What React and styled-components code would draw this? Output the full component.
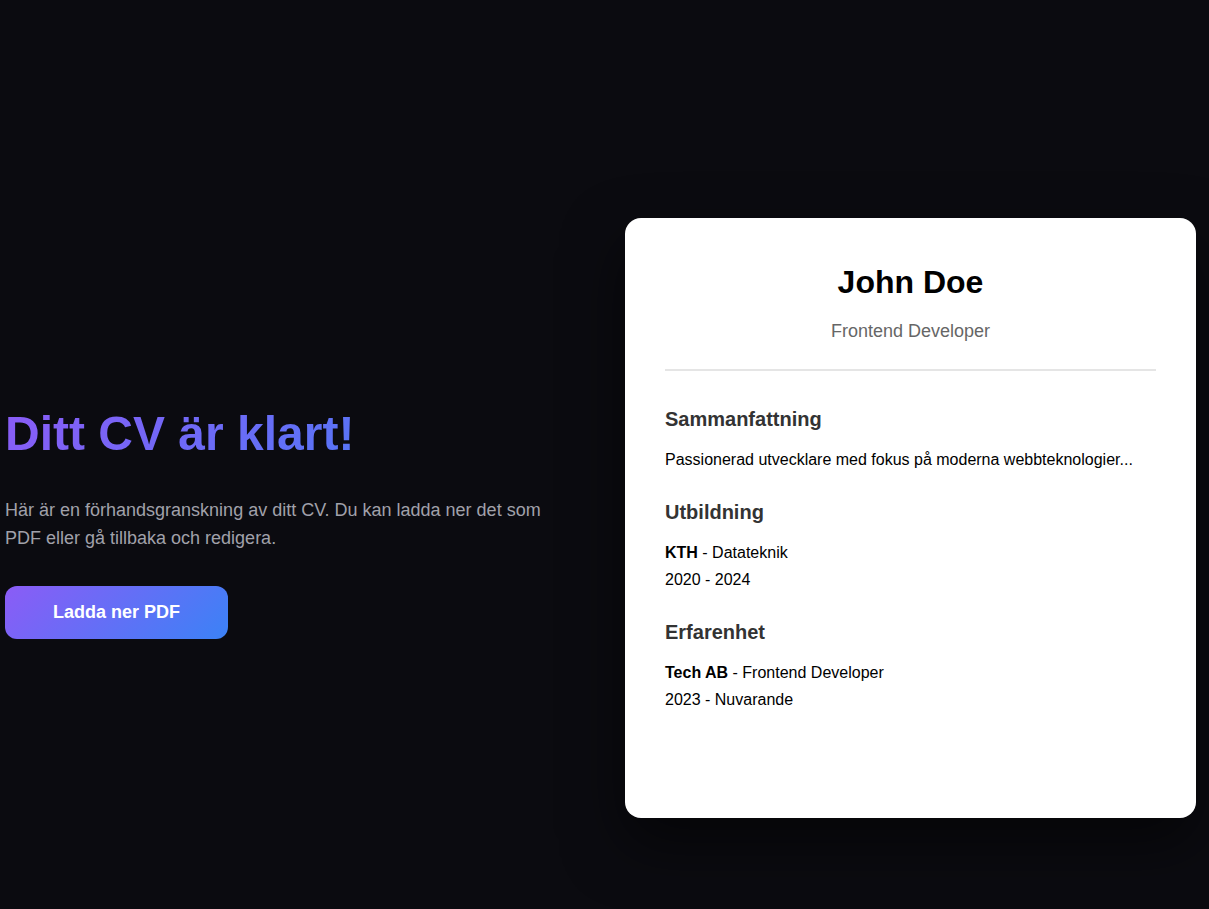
import styled, { createGlobalStyle } from 'styled-components';

const GlobalStyle = createGlobalStyle`
  * {
    box-sizing: border-box;
  }
  body {
    margin: 0;
    background: #0b0b10;
    font-family: 'Liberation Sans', Arial, sans-serif;
  }
`;

const Page = styled.main`
  min-height: 100vh;
  padding: 127px 13px 0 5px;
  display: flex;
  align-items: center;
  justify-content: space-between;
`;

const Intro = styled.section`
  width: 560px;
  margin-top: 8px;

  h1 {
    margin: 0 0 35px;
    font-size: 48px;
    font-weight: 700;
    line-height: normal;
    background: linear-gradient(135deg, #8b5cf6, #3b82f6);
    -webkit-background-clip: text;
    background-clip: text;
    color: transparent;
  }

  p {
    margin: 0 0 34px;
    font-size: 18px;
    line-height: 28px;
    color: #a1a1aa;
    max-width: 545px;
  }
`;

const DownloadButton = styled.button`
  border: none;
  border-radius: 12px;
  padding: 16px 48px;
  font-family: inherit;
  font-size: 18px;
  font-weight: 700;
  color: #ffffff;
  background: linear-gradient(135deg, #8b5cf6, #3b82f6);
  cursor: pointer;
`;

const Card = styled.article`
  width: 571px;
  height: 600px;
  background: #ffffff;
  border-radius: 16px;
  padding: 40px;
  box-shadow: 0 25px 60px rgba(0, 0, 0, 0.55);
  color: #000000;
`;

const Header = styled.header`
  text-align: center;
  padding-bottom: 27px;
  border-bottom: 2px solid #e5e5e5;
  margin-bottom: 37px;

  h2 {
    margin: 6px 0 20px;
    font-size: 32px;
    font-weight: 700;
    line-height: normal;
  }

  div {
    font-size: 18px;
    color: #666666;
  }
`;

const Section = styled.section`
  margin-bottom: 28px;

  h3 {
    margin: 0 0 16px;
    font-size: 20px;
    font-weight: 700;
    line-height: normal;
    color: #333333;
  }

  p {
    margin: 0;
    font-size: 16px;
    line-height: 1.65;
  }
`;

function App() {
  return (
    <>
      <GlobalStyle />
      <Page>
        <Intro>
          <h1>Ditt CV är klart!</h1>
          <p>
            Här är en förhandsgranskning av ditt CV. Du kan ladda ner det som
            PDF eller gå tillbaka och redigera.
          </p>
          <DownloadButton>Ladda ner PDF</DownloadButton>
        </Intro>

        <Card>
          <Header>
            <h2>John Doe</h2>
            <div>Frontend Developer</div>
          </Header>

          <Section>
            <h3>Sammanfattning</h3>
            <p>Passionerad utvecklare med fokus på moderna webbteknologier...</p>
          </Section>

          <Section>
            <h3>Utbildning</h3>
            <p>
              <strong>KTH</strong> - Datateknik
              <br />
              2020 - 2024
            </p>
          </Section>

          <Section>
            <h3>Erfarenhet</h3>
            <p>
              <strong>Tech AB</strong> - Frontend Developer
              <br />
              2023 - Nuvarande
            </p>
          </Section>
        </Card>
      </Page>
    </>
  );
}

export default App;
